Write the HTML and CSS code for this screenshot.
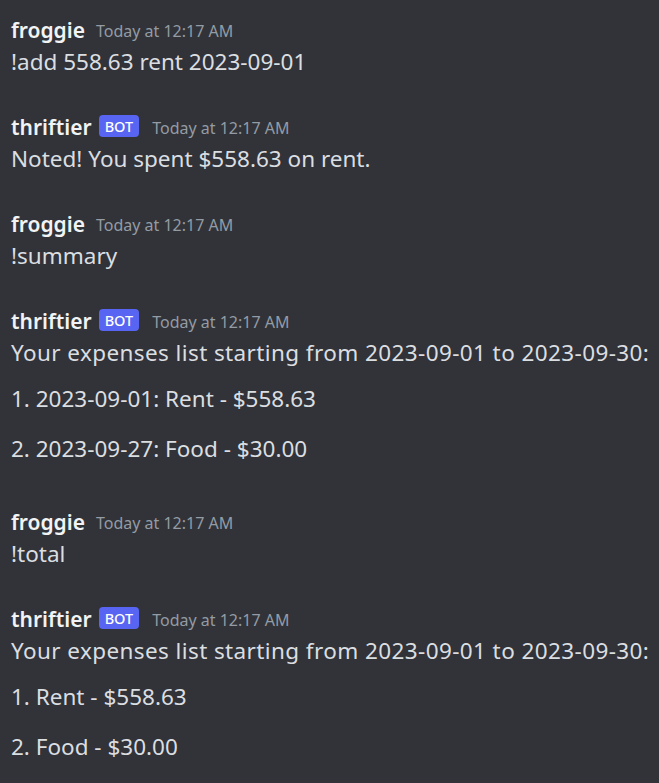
FILE: index.html
```html
<!DOCTYPE html>
<html>
<head>
<meta charset="utf-8">
<link rel="stylesheet" href="styles.css">
</head>
<body>
<div class="chat">
  <div class="msg">
    <div class="head"><span class="name">froggie</span><span class="time">Today at 12:17 AM</span></div>
    <div class="line">!add 558.63 rent 2023-09-01</div>
  </div>
  <div class="msg">
    <div class="head"><span class="name">thriftier</span><span class="bot">BOT</span><span class="time">Today at 12:17 AM</span></div>
    <div class="line">Noted! You spent $558.63 on rent.</div>
  </div>
  <div class="msg">
    <div class="head"><span class="name">froggie</span><span class="time">Today at 12:17 AM</span></div>
    <div class="line">!summary</div>
  </div>
  <div class="msg">
    <div class="head"><span class="name">thriftier</span><span class="bot">BOT</span><span class="time">Today at 12:17 AM</span></div>
    <div class="line wide">Your expenses list starting from 2023-09-01 to 2023-09-30:</div>
    <div class="list">
      <div class="line">1. 2023-09-01: Rent - $558.63</div>
      <div class="line">2. 2023-09-27: Food - $30.00</div>
    </div>
  </div>
  <div class="msg gap-lg">
    <div class="head"><span class="name">froggie</span><span class="time">Today at 12:17 AM</span></div>
    <div class="line">!total</div>
  </div>
  <div class="msg">
    <div class="head"><span class="name">thriftier</span><span class="bot">BOT</span><span class="time">Today at 12:17 AM</span></div>
    <div class="line wide">Your expenses list starting from 2023-09-01 to 2023-09-30:</div>
    <div class="list">
      <div class="line">1. Rent - $558.63</div>
      <div class="line">2. Food - $30.00</div>
    </div>
  </div>
</div>
</body>
</html>
```

FILE: styles.css
```css
html, body {
  margin: 0;
  padding: 0;
  background: #313338;
  height: 100%;
}
body {
  font-family: "Noto Sans", "Open Sans", sans-serif;
  color: #dbdee1;
}
.chat {
  padding: 14px 11px 0 11px;
  display: flex;
  flex-direction: column;
  gap: 33px;
}
.msg {
  display: flex;
  flex-direction: column;
}
.msg.gap-lg {
  margin-top: 8px;
}
.head {
  display: flex;
  align-items: center;
  height: 32px;
}
.name {
  font-size: 21px;
  font-weight: 600;
  color: #f2f3f5;
}
.bot {
  background: #5865f2;
  color: #fff;
  font-size: 14.5px;
  font-weight: 500;
  height: 22px;
  line-height: 22px;
  padding: 0 6px;
  border-radius: 4px;
  margin-left: 7px;
  margin-right: 2px;
  margin-top: -3px;
}
.time {
  font-size: 16px;
  color: #949ba4;
  margin-left: 11px;
  margin-top: 2px;
}
.line {
  font-size: 22.5px;
  line-height: 32px;
  white-space: nowrap;
}
.line.wide {
  letter-spacing: 0.4px;
}
.list {
  display: flex;
  flex-direction: column;
  gap: 18px;
  margin-top: 14px;
}
```
